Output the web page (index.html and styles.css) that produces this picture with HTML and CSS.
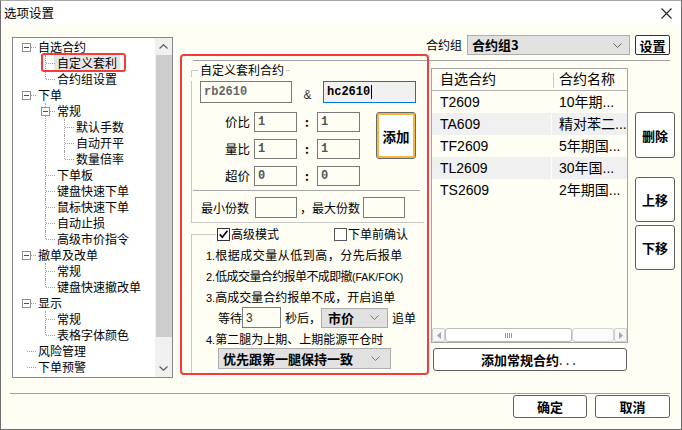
FILE: index.html
```html
<!DOCTYPE html>
<html lang="zh-CN">
<head>
    <meta charset="UTF-8">
    <title>选项设置</title>
    <link rel="stylesheet" href="styles.css">
</head>
<body>
    <div class="window">
        <div class="titlebar">
            <span>选项设置</span>
            <svg class="close" width="11" height="11" viewBox="0 0 11 11"><path d="M0.5 0.5L10.5 10.5M10.5 0.5L0.5 10.5" stroke="#222" stroke-width="1.1"/></svg>
        </div>

        <div class="body">
            <!-- left tree -->
            <div class="tree">
                <div class="tree-view">
                    <ul class="tree-list">
                        <li>
                            <div class="row"><span class="box"></span>自选合约</div>
                            <ul>
                                <li><div class="row"><span class="sel">自定义套利</span></div></li>
                                <li><div class="row">合约组设置</div></li>
                            </ul>
                        </li>
                        <li>
                            <div class="row"><span class="box"></span>下单</div>
                            <ul>
                                <li>
                                    <div class="row"><span class="box"></span>常规</div>
                                    <ul>
                                        <li><div class="row">默认手数</div></li>
                                        <li><div class="row">自动开平</div></li>
                                        <li><div class="row">数量倍率</div></li>
                                    </ul>
                                </li>
                                <li><div class="row">下单板</div></li>
                                <li><div class="row">键盘快速下单</div></li>
                                <li><div class="row">鼠标快速下单</div></li>
                                <li><div class="row">自动止损</div></li>
                                <li><div class="row">高级市价指令</div></li>
                            </ul>
                        </li>
                        <li>
                            <div class="row"><span class="box"></span>撤单及改单</div>
                            <ul>
                                <li><div class="row">常规</div></li>
                                <li><div class="row">键盘快速撤改单</div></li>
                            </ul>
                        </li>
                        <li>
                            <div class="row"><span class="box"></span>显示</div>
                            <ul>
                                <li><div class="row">常规</div></li>
                                <li><div class="row">表格字体颜色</div></li>
                            </ul>
                        </li>
                        <li><div class="row">风险管理</div></li>
                        <li><div class="row">下单预警</div></li>
                        <li><div class="row">提示及反馈</div></li>
                    </ul>
                </div>
                <div class="vscroll">
                    <div class="vs-btn"><svg width="9" height="5" viewBox="0 0 9 5"><path d="M0.5 4.5L4.5 0.8L8.5 4.5" fill="none" stroke="#606060" stroke-width="1.3"/></svg></div>
                    <div class="vs-thumb"></div>
                    <div class="vs-track"></div>
                    <div class="vs-btn"><svg width="9" height="5" viewBox="0 0 9 5"><path d="M0.5 0.5L4.5 4.2L8.5 0.5" fill="none" stroke="#606060" stroke-width="1.3"/></svg></div>
                </div>
                <div class="mark mark-tree"></div>
            </div>

            <!-- right part -->
            <div class="main">
                <div class="group-row">
                    <span class="group-label">合约组</span>
                    <div class="select select-group">
                        <span>合约组3</span>
                        <svg width="9" height="5" viewBox="0 0 9 5"><path d="M0.5 0.5L4.5 4.5L8.5 0.5" fill="none" stroke="#666"/></svg>
                    </div>
                    <button class="btn btn-set">设置</button>
                </div>
                <div class="hsep"></div>

                <div class="columns">
                    <div class="arb">
                        <div class="gb-head">
                            <span class="gb-corner corner-1"></span>
                            <span class="gb-title">自定义套利合约</span>
                            <span class="gb-seg"></span>
                        </div>
                        <div class="gb-body gb-body-1">
                            <div class="pair-row">
                                <input class="field code" value="rb2610">
                                <span class="amp">&amp;</span>
                                <div class="field code active">hc2610<span class="caret"></span></div>
                            </div>
                            <div class="ratio-grid">
                                <span class="ratio-label">价比</span>
                                <input class="field small" value="1">
                                <span class="colon">:</span>
                                <input class="field small" value="1">
                                <button class="btn btn-add">添加</button>

                                <span class="ratio-label">量比</span>
                                <input class="field small" value="1">
                                <span class="colon">:</span>
                                <input class="field small" value="1">

                                <span class="ratio-label">超价</span>
                                <input class="field small" value="0">
                                <span class="colon">:</span>
                                <input class="field small" value="0">
                            </div>
                            <div class="gb-sep"></div>
                            <div class="count-row">
                                <span>最小份数</span>
                                <input class="field count count-min" value="">
                                <span class="count-max-label">，最大份数</span>
                                <input class="field count" value="">
                            </div>
                        </div>

                        <div class="gb-head gb-head-2">
                            <span class="gb-corner corner-2"></span>
                            <span class="check checked"><svg width="11" height="11" viewBox="0 0 11 11"><path d="M1.8 5.4L4.3 8.2L9.4 1.8" fill="none" stroke="#000" stroke-width="1.7"/></svg></span>
                            <span class="check-label">高级模式</span>
                            <span class="check check-confirm"></span>
                            <span class="check-label">下单前确认</span>
                        </div>
                        <div class="gb-body gb-body-2">
                            <p class="note note-1"><span class="num">1.</span>根据成交量从低到高，分先后报单</p>
                            <p class="note note-2"><span class="num">2.</span>低成交量合约报单不成即撤<span class="latin">(FAK/FOK)</span></p>
                            <p class="note"><span class="num">3.</span>高成交量合约报单不成，开启追单</p>
                            <div class="chase-row">
                                <span>等待</span>
                                <input class="field wait" value="3">
                                <span class="after">秒后，</span>
                                <div class="select select-price">
                                    <span>市价</span>
                                    <svg width="9" height="5" viewBox="0 0 9 5"><path d="M0.5 0.5L4.5 4.5L8.5 0.5" fill="none" stroke="#777"/></svg>
                                </div>
                                <span class="after">追单</span>
                            </div>
                            <p class="note"><span class="num">4.</span>第二腿为上期、上期能源平仓时</p>
                            <div class="select select-close">
                                <span>优先跟第一腿保持一致</span>
                                <svg width="9" height="5" viewBox="0 0 9 5"><path d="M0.5 0.5L4.5 4.5L8.5 0.5" fill="none" stroke="#777"/></svg>
                            </div>
                        </div>
                    </div>

                    <div class="list-col">
                        <div class="list">
                            <div class="list-head">
                                <span class="cell">自选合约</span>
                                <span class="cell cell-name">合约名称</span>
                            </div>
                            <div class="list-rows">
                                <div class="list-row"><span class="cell">T2609</span><span class="cell cell-name">10年期...</span></div>
                                <div class="list-row alt"><span class="cell">TA609</span><span class="cell cell-name">精对苯二...</span></div>
                                <div class="list-row"><span class="cell">TF2609</span><span class="cell cell-name">5年期国...</span></div>
                                <div class="list-row alt"><span class="cell">TL2609</span><span class="cell cell-name">30年国...</span></div>
                                <div class="list-row"><span class="cell">TS2609</span><span class="cell cell-name">2年期国...</span></div>
                            </div>
                            <div class="hscroll">
                                <div class="hs-btn"><svg width="4" height="7" viewBox="0 0 4 7"><path d="M4 0L0 3.5L4 7Z" fill="#a6a6a6"/></svg></div>
                                <div class="hs-thumb"><span class="grip"></span></div>
                                <div class="hs-track"></div>
                                <div class="hs-btn"><svg width="4" height="7" viewBox="0 0 4 7"><path d="M0 0L4 3.5L0 7Z" fill="#a6a6a6"/></svg></div>
                            </div>
                        </div>
                        <button class="btn btn-wide">添加常规合约<span class="dots">...</span></button>
                    </div>

                    <div class="side">
                        <button class="btn btn-del">删除</button>
                        <button class="btn btn-up">上移</button>
                        <button class="btn btn-down">下移</button>
                    </div>
                </div>

                <div class="mark mark-main"></div>
            </div>
        </div>

        <div class="footer">
            <button class="btn btn-foot">确定</button>
            <button class="btn btn-foot btn-cancel">取消</button>
        </div>
    </div>
</body>
</html>
```

FILE: styles.css
```css
* {
    box-sizing: border-box;
}

body {
    margin: 0;
    font-family: "Noto Sans CJK SC", sans-serif;
    font-size: 12px;
    color: #000;
    background: #fff;
}

ul {
    list-style: none;
    margin: 0;
    padding: 0;
}

p {
    margin: 0;
}

.window {
    width: 682px;
    height: 430px;
    border: 1px solid #6f6f6f;
    border-top-color: #a8a8a8;
    background: #fefef5;
    display: flex;
    flex-direction: column;
}

.titlebar {
    flex: none;
    height: 24px;
    background: #fff;
    display: flex;
    align-items: center;
    justify-content: space-between;
    padding: 0 9px 0 3px;
    font-size: 12.5px;
    line-height: 24px;
}

.body {
    flex: none;
    display: flex;
    height: 368px;
    padding: 10px 0 0 11px;
}

/* tree */
.tree {
    position: relative;
    flex: none;
    display: flex;
    width: 161px;
    height: 341px;
    margin-top: 2px;
    border: 1px solid #828790;
    background: #fff;
}

.tree-view {
    flex: 1;
    overflow: hidden;
    padding-top: 1px;
}

.tree-list ul {
    margin-left: 19px;
}

.tree-list li {
    position: relative;
}

.tree-list ul > li::before {
    content: "";
    position: absolute;
    left: 13px;
    top: 0;
    bottom: 0;
    border-left: 1px dotted #a0a0a0;
}

.tree-list ul > li:last-child::before {
    bottom: auto;
    height: 8px;
}

.row {
    position: relative;
    height: 16px;
    line-height: 16px;
    padding-left: 25px;
    white-space: nowrap;
}

.row::before {
    content: "";
    position: absolute;
    left: 14px;
    top: 8px;
    width: 9px;
    border-top: 1px dotted #a0a0a0;
}

.box {
    position: absolute;
    z-index: 1;
    left: 9px;
    top: 4px;
    width: 9px;
    height: 9px;
    border: 1px solid #8f8f8f;
    background: #fff;
}

.box::after {
    content: "";
    position: absolute;
    left: 1px;
    top: 3px;
    width: 5px;
    height: 1px;
    background: #2450b8;
}

.sel {
    background: #e6e6e6;
    padding: 1px 3px;
    margin-left: -3px;
}

.vscroll {
    flex: none;
    width: 17px;
    display: flex;
    flex-direction: column;
    background: #f0f0f0;
}

.vs-btn {
    height: 17px;
    display: flex;
    align-items: center;
    justify-content: center;
}

.vs-thumb {
    height: 282px;
    margin-left: 1px;
    background: #cdcdcd;
}

.vs-track {
    flex: 1;
}

/* red annotation frames */
.mark {
    position: absolute;
    border: 2px solid #f43c3c;
    border-radius: 4px;
    pointer-events: none;
}

.mark-tree {
    left: 28px;
    top: 15px;
    width: 85px;
    height: 19px;
    border-radius: 3px;
}

.mark-main {
    left: -11px;
    top: 19px;
    width: 249px;
    height: 321px;
}

/* main area */
.main {
    position: relative;
    flex: none;
    width: 484px;
    margin-left: 18px;
}

.group-row {
    display: flex;
    justify-content: flex-end;
    align-items: center;
    height: 20px;
    padding-right: 5px;
}

.group-label {
    margin-right: 5px;
    line-height: 20px;
}

.select {
    display: flex;
    align-items: center;
    justify-content: space-between;
    background: #e1e1e1;
    border: 1px solid #adadad;
    font-weight: bold;
    font-size: 13px;
    line-height: 18px;
    padding: 0 7px 0 4px;
}

.select-group {
    width: 163px;
    height: 20px;
}

.btn {
    display: flex;
    align-items: center;
    justify-content: center;
    padding: 0;
    background: #fff;
    border: 1px solid #5e5e5e;
    border-radius: 3px;
    font-family: inherit;
    font-weight: bold;
    font-size: 13px;
    color: #000;
}

.btn-set {
    width: 35px;
    height: 20px;
    margin-left: 5px;
    border-color: #333;
    border-radius: 2px;
}

.hsep {
    height: 1px;
    margin: 5px 5px 0 2px;
    background: #a0a0a0;
}

.columns {
    display: flex;
    align-items: flex-start;
}

/* arbitrage group boxes */
.arb {
    flex: none;
    width: 233px;
    margin-top: 2px;
}

.gb-head {
    display: flex;
    align-items: center;
    height: 14px;
    line-height: 14px;
}

.gb-corner {
    align-self: flex-end;
    height: 7px;
    border-top: 1px solid #c8c8c8;
    border-left: 1px solid #c8c8c8;
}

.corner-1 {
    width: 7px;
}

.gb-title {
    margin-left: 2px;
}

.gb-seg {
    width: 4px;
    height: 1px;
    margin-left: 2px;
    background: #c8c8c8;
}

.gb-body {
    border-left: 1px solid #c8c8c8;
    border-bottom: 1px solid #c8c8c8;
}

.gb-body-1 {
    padding-bottom: 4px;
}

.field {
    height: 22px;
    padding: 0 3px;
    border: 1px solid #7a7a7a;
    background: #fefef5;
    font: bold 12px "Liberation Mono", monospace;
    color: #666;
    outline: none;
}

.pair-row {
    display: flex;
    height: 22px;
    margin-top: 4px;
    padding-left: 8px;
}

.code {
    width: 92px;
    line-height: 20px;
}

.code.active {
    width: 93px;
    display: flex;
    align-items: center;
    border-color: #0078d7;
    background: #f0f0f0;
    color: #000;
}

.caret {
    width: 1px;
    height: 14px;
    margin-left: 1px;
    background: #000;
}

.amp {
    width: 31px;
    padding-top: 6px;
    text-align: center;
    font-family: "Liberation Sans", sans-serif;
    line-height: 16px;
    color: #333;
}

.ratio-grid {
    display: grid;
    grid-template-columns: 54px 43px 20px 43px 56px;
    grid-template-rows: 20px 20px 20px;
    row-gap: 7px;
    margin-top: 9px;
    padding-left: 8px;
}

.ratio-label {
    padding-right: 4px;
    text-align: right;
    line-height: 20px;
    font-size: 12.5px;
}

.field.small {
    width: 43px;
    height: 20px;
    color: #555;
}

.colon {
    text-align: center;
    font-weight: bold;
    line-height: 20px;
}

.btn-add {
    grid-column: 5;
    grid-row: 1 / 3;
    justify-self: end;
    width: 40px;
    height: 47px;
    border-color: #6a6a6a;
    box-shadow: inset 0 0 0 2px #f3b73e;
    font-size: 13.5px;
}

.gb-sep {
    height: 1px;
    margin: 4px 4px 0 1px;
    background: #a8a8a8;
}

.count-row {
    display: flex;
    align-items: center;
    height: 21px;
    margin-top: 6px;
    padding-left: 9px;
    line-height: 21px;
}

.field.count {
    width: 42px;
    height: 21px;
    margin-left: 3px;
}

.field.count-min {
    margin-left: 6px;
}

.count-max-label {
    margin-left: 3px;
}

.gb-head-2 {
    margin-top: 4px;
}

.corner-2 {
    width: 25px;
}

.check {
    width: 13px;
    height: 13px;
    margin-left: 1px;
    border: 1px solid #333;
    background: #fff;
    display: flex;
    align-items: center;
    justify-content: center;
}

.check-confirm {
    margin-left: 55px;
    border-color: #555;
}

.check-label {
    margin-left: 1px;
}

.gb-body-2 {
    padding: 3px 0 4px;
}

.note {
    height: 21px;
    line-height: 21px;
    padding-left: 14px;
    white-space: nowrap;
}

.note-1 {
    letter-spacing: 0.5px;
}

.note-2 {
    letter-spacing: -0.6px;
}

.num {
    font-family: "Liberation Sans", sans-serif;
    font-size: 11px;
    letter-spacing: 0;
}

.latin {
    font-family: "Liberation Sans", sans-serif;
    font-size: 10.5px;
    letter-spacing: 0;
}

.chase-row {
    display: flex;
    align-items: center;
    height: 21px;
    padding-left: 26px;
    line-height: 21px;
}

.field.wait {
    width: 39px;
    height: 21px;
    font: 12px "Liberation Sans", sans-serif;
    color: #333;
}

.after {
    margin-left: 4px;
}

.select-price {
    width: 67px;
    height: 20px;
    margin-left: 0;
    padding: 0 8px 0 6px;
}

.select-close {
    width: 173px;
    height: 21px;
    margin: -1px 0 0 26px;
    padding: 0 10px 0 4px;
}

/* contract list */
.list-col {
    flex: none;
    width: 197px;
    margin: 7px 0 0 7px;
}

.list {
    height: 275px;
    display: flex;
    flex-direction: column;
    border: 1px solid #a5a5a5;
    font-family: "Liberation Sans", "Noto Sans CJK SC", sans-serif;
    font-size: 14px;
}

.list-head {
    display: grid;
    grid-template-columns: 119px 1fr;
    column-gap: 1px;
    height: 22px;
    line-height: 21px;
    border-bottom: 1px solid #b4b4b4;
    background: linear-gradient(#c8c8c8, #c8c8c8) 121px 4px / 1px 15px no-repeat;
}

.list-rows {
    flex: 1;
}

.list-row {
    display: grid;
    grid-template-columns: 119px 1fr;
    column-gap: 1px;
    height: 22px;
    line-height: 22px;
}

.cell {
    padding-left: 8px;
    white-space: nowrap;
    overflow: hidden;
}

.cell-name {
    padding-left: 7px;
}

.list-row.alt .cell {
    background: #f0f0f0;
}

.hscroll {
    display: flex;
    height: 14px;
    background: #f6f6f6;
}

.hs-btn {
    width: 13px;
    display: flex;
    align-items: center;
    justify-content: center;
    border: 1px solid #cfcfcf;
    border-radius: 2px;
}

.hs-thumb {
    width: 127px;
    display: flex;
    align-items: center;
    justify-content: center;
    border: 1px solid #b9b9b9;
    border-radius: 3px;
    background: #fff;
}

.grip {
    width: 8px;
    height: 5px;
    background: repeating-linear-gradient(90deg, #9a9a9a 0 1px, transparent 1px 2px);
}

.hs-track {
    flex: 1;
    border: 1px solid #d4d4d4;
    border-radius: 3px;
    background: #fbfbfb;
}

.btn-wide {
    width: 194px;
    height: 23px;
    margin: 5px 0 0 2px;
}

.dots {
    letter-spacing: 3px;
    font-weight: normal;
}

.side {
    flex: none;
    width: 40px;
    margin: 51px 0 0 7px;
    display: flex;
    flex-direction: column;
}

.btn-del {
    height: 46px;
}

.btn-up {
    height: 45px;
    margin-top: 19px;
}

.btn-down {
    height: 45px;
    margin-top: 3px;
}

/* bottom buttons */
.footer {
    display: flex;
    justify-content: flex-end;
    gap: 8px;
    margin: 0 11px 0 9px;
    padding-top: 1px;
    border-top: 1px solid #a0a0a0;
}

.btn-foot {
    width: 74px;
    height: 23px;
}

.btn-cancel {
    width: 75px;
}
```
